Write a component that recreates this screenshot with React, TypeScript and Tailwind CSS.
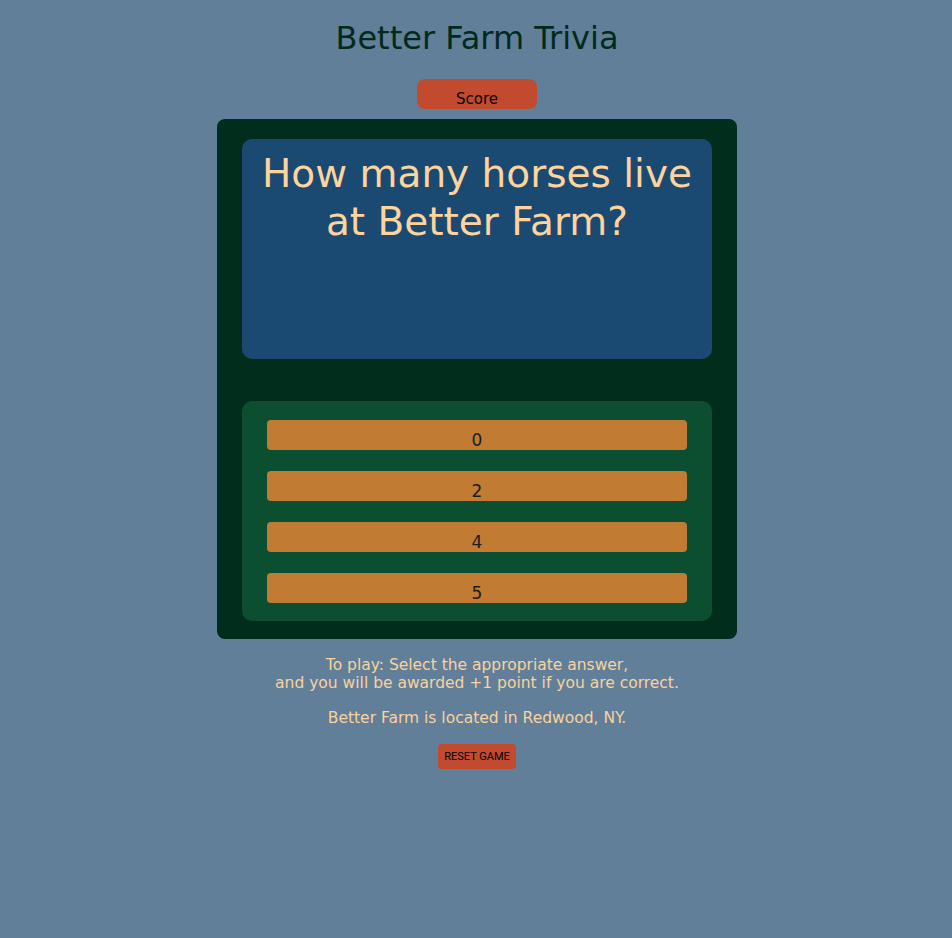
const answers = ["0", "2", "4", "5"];

export default function App() {
  return (
    <div className="min-h-[938px] bg-[#627f99] flex flex-col items-center pt-[17px] pl-[2px] [font-family:'DejaVu_Sans','Noto_Sans',sans-serif]">
      <h1 className="text-[32px] leading-[42px] text-[#002b1c] font-normal">
        Better Farm Trivia
      </h1>
      <button className="mt-[20px] w-[120px] h-[30px] rounded-[8px] bg-[#c24a2e] text-[15px] leading-[18px] text-black flex items-end justify-center pb-[1px]">
        Score
      </button>
      <div className="mt-[10px] w-[520px] h-[520px] rounded-[8px] bg-[#012d1c] px-[25px] pt-[20px] pb-[18px] flex flex-col">
        <div className="h-[220px] rounded-[10px] bg-[#1a4a72] pt-[11px] px-[10px] text-center text-[39px] leading-[48px] text-[#fdd49e]">
          How many horses live at Better Farm?
        </div>
        <div className="mt-[42px] h-[220px] rounded-[10px] bg-[#0b4f30] px-[25px] pt-[19px] flex flex-col gap-[21px]">
          {answers.map((a) => (
            <button
              key={a}
              className="h-[30px] rounded-[4px] bg-[#c17b32] text-[17px] leading-[20px] text-[#1c1c1c] flex items-end justify-center"
            >
              {a}
            </button>
          ))}
        </div>
      </div>
      <p className="mt-[17px] text-center text-[15.5px] leading-[18px] text-[#f9d29e]">
        To play: Select the appropriate answer,
        <br />
        and you will be awarded +1 point if you are correct.
      </p>
      <p className="mt-[17px] text-center text-[15.5px] leading-[18px] text-[#f9d29e]">
        Better Farm is located in Redwood, NY.
      </p>
      <button className="mt-[17px] h-[25px] w-[78px] pt-[2px] rounded-[4px] bg-[#c24a2e] text-[11px] text-black [font-family:Roboto,'Liberation_Sans',sans-serif]">
        RESET GAME
      </button>
    </div>
  );
}
